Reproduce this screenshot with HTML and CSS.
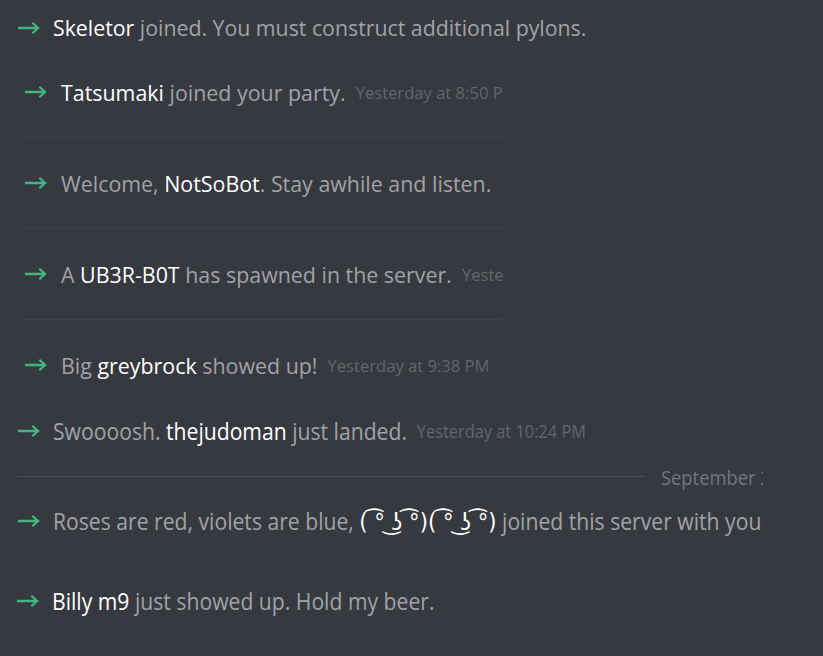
FILE: index.html
```html
<!DOCTYPE html>
<html>
<head>
<meta charset="utf-8">
<link rel="stylesheet" href="styles.css">
</head>
<body>
<div class="chat">
  <div class="row row-top">
    <svg class="arrow" viewBox="0 0 24 14"><path d="M1 7H22M16 1.5L22 7L16 12.5"/></svg>
    <span class="text"><span class="msg"><b class="name">Skeletor</b> joined. You must construct additional pylons.</span></span>
  </div>

  <div class="group">
    <div class="row row-boxed">
      <svg class="arrow" viewBox="0 0 24 14"><path d="M1 7H22M16 1.5L22 7L16 12.5"/></svg>
      <span class="text"><span class="msg"><b class="name">Tatsumaki</b> joined your party.</span><span class="time">Yesterday at 8:50 PM</span></span>
    </div>
    <div class="row row-boxed">
      <svg class="arrow" viewBox="0 0 24 14"><path d="M1 7H22M16 1.5L22 7L16 12.5"/></svg>
      <span class="text"><span class="msg">Welcome, <b class="name">NotSoBot</b>. Stay awhile and listen.</span></span>
    </div>
    <div class="row row-boxed">
      <svg class="arrow" viewBox="0 0 24 14"><path d="M1 7H22M16 1.5L22 7L16 12.5"/></svg>
      <span class="text"><span class="msg">A <b class="name">UB3R-B0T</b> has spawned in the server.</span><span class="time">Yesterday at 9:12 PM</span></span>
    </div>
    <div class="row row-boxed last">
      <svg class="arrow" viewBox="0 0 24 14"><path d="M1 7H22M16 1.5L22 7L16 12.5"/></svg>
      <span class="text"><span class="msg">Big <b class="name">greybrock</b> showed up!</span><span class="time">Yesterday at 9:38 PM</span></span>
    </div>
  </div>

  <div class="lower">
    <div class="row row-narrow r6">
      <svg class="arrow" viewBox="0 0 24 14"><path d="M1 7H22M16 1.5L22 7L16 12.5"/></svg>
      <span class="squeeze"><span class="msg">Swoooosh. <b class="name">thejudoman</b> just landed.</span><span class="time">Yesterday at 10:24 PM</span></span>
    </div>
    <div class="divider">
      <span class="line"></span>
      <span class="date squeeze">September 2, 2017</span>
    </div>
    <div class="row row-narrow r7">
      <svg class="arrow" viewBox="0 0 24 14"><path d="M1 7H22M16 1.5L22 7L16 12.5"/></svg>
      <span class="squeeze"><span class="msg">Roses are red, violets are blue, <b class="name lenny">( ͡° ͜ʖ ͡°)( ͡° ͜ʖ ͡°)</b> joined this server with you!</span></span>
    </div>
    <div class="row row-narrow r8">
      <svg class="arrow" viewBox="0 0 24 14"><path d="M1 7H22M16 1.5L22 7L16 12.5"/></svg>
      <span class="squeeze"><span class="msg"><b class="name">Billy m9</b> just showed up. Hold my beer.</span></span>
    </div>
  </div>
</div>
</body>
</html>
```

FILE: styles.css
```css
html, body {
  margin: 0;
  padding: 0;
  background: #36393f;
}
body {
  width: 823px;
  height: 656px;
  overflow: hidden;
  font-family: "Open Sans", "Noto Sans", "DejaVu Sans", sans-serif;
}
.chat {
  display: flex;
  flex-direction: column;
}
.row {
  display: flex;
  align-items: center;
  white-space: nowrap;
}
.arrow {
  width: 23px;
  height: 14px;
  flex: none;
  fill: none;
  stroke: #43b581;
  stroke-width: 2.4;
}
.text {
  display: inline-flex;
  align-items: center;
}
.msg {
  font-size: 21.4px;
  color: #a1a3a7;
}
.row-top .msg {
  font-size: 21.3px;
}
.name {
  font-weight: normal;
  color: #ffffff;
}
.time {
  font-size: 16.6px;
  color: #63666c;
  margin-left: 10px;
}
.row-top {
  height: 47px;
  padding-left: 17px;
  padding-top: 8px;
  box-sizing: border-box;
  gap: 13px;
}
.group {
  margin-left: 24px;
  width: 479px;
  overflow: hidden;
}
.row-boxed {
  height: 90px;
  gap: 14px;
  border-bottom: 1px solid #3e4147;
  overflow: hidden;
}
.row-boxed.last {
  border-bottom: none;
}
.lower {
  width: 763px;
  overflow: hidden;
  display: flex;
  flex-direction: column;
}
.row-narrow {
  padding-left: 17px;
  gap: 13px;
}
.squeeze {
  display: inline-flex;
  align-items: center;
  transform: scaleX(0.9);
  transform-origin: left center;
}
.row-narrow .msg {
  font-size: 23.5px;
}
.row-narrow .time {
  font-size: 18.2px;
  margin-left: 11px;
}
.r6 {
  height: 42px;
}
.r7 {
  height: 40px;
}
.r8 {
  height: 40px;
  margin-top: 40px;
  padding-left: 16px;
}
.divider {
  height: 49px;
  display: flex;
  align-items: center;
  padding-left: 17px;
  gap: 16px;
}
.line {
  width: 628px;
  height: 1px;
  background: #4a4d53;
  flex: none;
}
.date {
  font-size: 20.4px;
  color: #72767d;
  white-space: nowrap;
}
.lenny {
  font-family: "DejaVu Sans", sans-serif;
}
```
